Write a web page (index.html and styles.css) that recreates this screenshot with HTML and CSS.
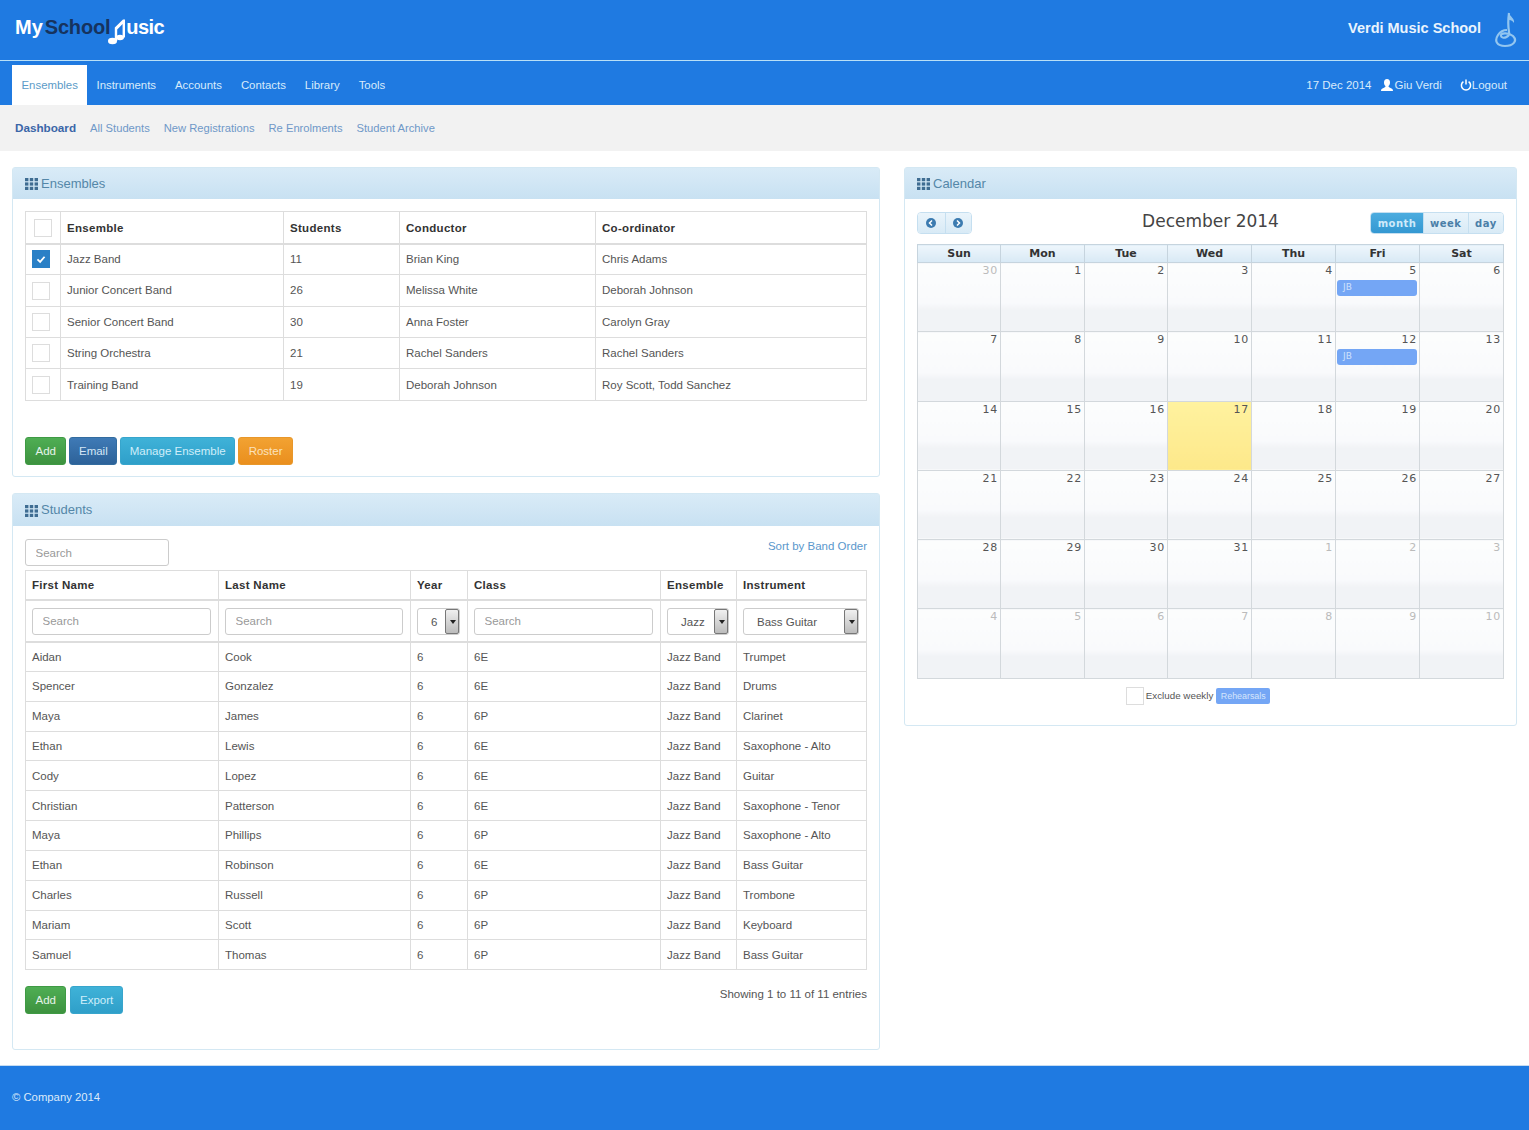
FILE: index.html
```html
<!DOCTYPE html>
<html lang="en">
<head>
<meta charset="utf-8">
<title>MySchoolMusic</title>
<link rel="stylesheet" href="styles.css">
</head>
<body>
<svg class="defs" width="0" height="0" aria-hidden="true">
  <symbol id="grid" viewBox="0 0 13 12">
    <rect x="0" y="0" width="3.4" height="3.2"/><rect x="4.8" y="0" width="3.4" height="3.2"/><rect x="9.6" y="0" width="3.4" height="3.2"/>
    <rect x="0" y="4.4" width="3.4" height="3.2"/><rect x="4.8" y="4.4" width="3.4" height="3.2"/><rect x="9.6" y="4.4" width="3.4" height="3.2"/>
    <rect x="0" y="8.8" width="3.4" height="3.2"/><rect x="4.8" y="8.8" width="3.4" height="3.2"/><rect x="9.6" y="8.8" width="3.4" height="3.2"/>
  </symbol>
</svg>
<header class="top">
  <div class="logo">
    <span class="logo-my">My</span><span class="logo-school">School</span>
    <svg class="logo-note" viewBox="0 0 19 27"><ellipse cx="4.500" cy="23" rx="4.500" ry="3.200"/><ellipse cx="12" cy="19.500" rx="4" ry="2.700"/><path d="M6.800 23V9.500L15 1.500H17V19.500H14.600V6L9.200 11.500V23Z"/></svg>
    <span class="logo-usic">usic</span>
  </div>
  <div class="school">
    <span>Verdi Music School</span>
    <svg class="school-note" viewBox="0 0 24 36"><path class="note-flag" d="M15 1C16 5 21 6 20 11 18 8 16 8 15 8Z"/><path d="M15 1C14 8 14 14 15 20 16 26 8 27 7 24 6 21 14 20 19 24 24 29 19 34 11 34 3 34 0 29 4 23 6 20 10 18 13 18"/></svg>
  </div>
</header>
<nav class="mainnav">
  <ul class="tabs">
    <li class="tab active">Ensembles</li>
    <li class="tab">Instruments</li>
    <li class="tab">Accounts</li>
    <li class="tab">Contacts</li>
    <li class="tab">Library</li>
    <li class="tab">Tools</li>
  </ul>
  <div class="usernav">
    <span class="date">17 Dec 2014</span>
    <svg class="i-user" viewBox="0 0 12 12"><path d="M6 0C8 0 9 1.500 9 3.400 9 5 8.300 6.300 7.500 7 7.500 8 8 8.300 9.500 8.900 11 9.500 12 10 12 12H0C0 10 1 9.500 2.500 8.900 4 8.300 4.500 8 4.500 7 3.700 6.300 3 5 3 3.400 3 1.500 4 0 6 0Z"/></svg>
    <span class="uname">Giu Verdi</span>
    <svg class="i-power" viewBox="0 0 12 12"><path d="M3.400 2.600A4.600 4.600 0 1 0 8.600 2.600M6 .5V5.500"/></svg>
    <span>Logout</span>
  </div>
</nav>
<nav class="subnav">
  <span class="sub current">Dashboard</span>
  <span class="sub">All Students</span>
  <span class="sub">New Registrations</span>
  <span class="sub">Re Enrolments</span>
  <span class="sub">Student Archive</span>
</nav>
<main class="content">
  <div class="leftcol">
    <section class="panel ensembles">
      <h2 class="panel-head"><svg class="i-grid"><use href="#grid"/></svg>Ensembles</h2>
      <div class="panel-body">
        <table class="tbl ens-table">
          <colgroup><col class="e1"><col class="e2"><col class="e3"><col class="e4"><col></colgroup>
          <thead><tr><th><span class="cb cb-head"></span></th><th>Ensemble</th><th>Students</th><th>Conductor</th><th>Co-ordinator</th></tr></thead>
          <tbody>
            <tr><td><span class="cb checked"><svg viewBox="0 0 18 18"><path d="M5 9.500L8 12.300 13 6.500"/></svg></span></td><td>Jazz Band</td><td>11</td><td>Brian King</td><td>Chris Adams</td></tr>
            <tr><td><span class="cb"></span></td><td>Junior Concert Band</td><td>26</td><td>Melissa White</td><td>Deborah Johnson</td></tr>
            <tr><td><span class="cb"></span></td><td>Senior Concert Band</td><td>30</td><td>Anna Foster</td><td>Carolyn Gray</td></tr>
            <tr><td><span class="cb"></span></td><td>String Orchestra</td><td>21</td><td>Rachel Sanders</td><td>Rachel Sanders</td></tr>
            <tr><td><span class="cb"></span></td><td>Training Band</td><td>19</td><td>Deborah Johnson</td><td>Roy Scott, Todd Sanchez</td></tr>
          </tbody>
        </table>
        <div class="btns ens-btns">
          <button class="btn green">Add</button>
          <button class="btn navy">Email</button>
          <button class="btn cyan">Manage Ensemble</button>
          <button class="btn orange">Roster</button>
        </div>
      </div>
    </section>
    <section class="panel students">
      <h2 class="panel-head"><svg class="i-grid"><use href="#grid"/></svg>Students</h2>
      <div class="panel-body">
        <div class="stu-tools">
          <input class="field global" placeholder="Search">
          <a class="sortlink">Sort by Band Order</a>
        </div>
        <table class="tbl stu-table">
          <colgroup><col class="s1"><col class="s2"><col class="s3"><col class="s4"><col class="s5"><col></colgroup>
          <thead>
            <tr class="stu-head"><th>First Name</th><th>Last Name</th><th>Year</th><th>Class</th><th>Ensemble</th><th>Instrument</th></tr>
            <tr class="stu-filter">
              <td><input class="field" placeholder="Search"></td>
              <td><input class="field" placeholder="Search"></td>
              <td><div class="sel">6<span class="sel-btn"></span></div></td>
              <td><input class="field" placeholder="Search"></td>
              <td><div class="sel">Jazz<span class="sel-btn"></span></div></td>
              <td><div class="sel">Bass Guitar<span class="sel-btn"></span></div></td>
            </tr>
          </thead>
          <tbody>
            <tr><td>Aidan</td><td>Cook</td><td>6</td><td>6E</td><td>Jazz Band</td><td>Trumpet</td></tr>
            <tr><td>Spencer</td><td>Gonzalez</td><td>6</td><td>6E</td><td>Jazz Band</td><td>Drums</td></tr>
            <tr><td>Maya</td><td>James</td><td>6</td><td>6P</td><td>Jazz Band</td><td>Clarinet</td></tr>
            <tr><td>Ethan</td><td>Lewis</td><td>6</td><td>6E</td><td>Jazz Band</td><td>Saxophone - Alto</td></tr>
            <tr><td>Cody</td><td>Lopez</td><td>6</td><td>6E</td><td>Jazz Band</td><td>Guitar</td></tr>
            <tr><td>Christian</td><td>Patterson</td><td>6</td><td>6E</td><td>Jazz Band</td><td>Saxophone - Tenor</td></tr>
            <tr><td>Maya</td><td>Phillips</td><td>6</td><td>6P</td><td>Jazz Band</td><td>Saxophone - Alto</td></tr>
            <tr><td>Ethan</td><td>Robinson</td><td>6</td><td>6E</td><td>Jazz Band</td><td>Bass Guitar</td></tr>
            <tr><td>Charles</td><td>Russell</td><td>6</td><td>6P</td><td>Jazz Band</td><td>Trombone</td></tr>
            <tr><td>Mariam</td><td>Scott</td><td>6</td><td>6P</td><td>Jazz Band</td><td>Keyboard</td></tr>
            <tr><td>Samuel</td><td>Thomas</td><td>6</td><td>6P</td><td>Jazz Band</td><td>Bass Guitar</td></tr>
          </tbody>
        </table>
        <div class="stu-foot">
          <div class="btns">
            <button class="btn green">Add</button>
            <button class="btn cyan export">Export</button>
          </div>
          <span class="info">Showing 1 to 11 of 11 entries</span>
        </div>
      </div>
    </section>
  </div>
  <section class="panel calendar">
    <h2 class="panel-head"><svg class="i-grid"><use href="#grid"/></svg>Calendar</h2>
    <div class="panel-body">
      <div class="cal-bar">
        <div class="cal-group">
          <span class="cal-btn arrow"><svg viewBox="0 0 10 10"><circle cx="5" cy="5" r="5"/><path d="M6 2.500L3.500 5 6 7.500"/></svg></span>
          <span class="cal-btn arrow"><svg viewBox="0 0 10 10"><circle cx="5" cy="5" r="5"/><path d="M4 2.500L6.500 5 4 7.500"/></svg></span>
        </div>
        <div class="cal-title">December 2014</div>
        <div class="cal-group cal-views">
          <span class="cal-btn view on">month</span>
          <span class="cal-btn view">week</span>
          <span class="cal-btn view">day</span>
        </div>
      </div>
      <table class="cal">
        <colgroup><col class="c83"><col class="c84"><col class="c83"><col class="c84"><col class="c84"><col class="c84"><col class="c84"></colgroup>
        <thead><tr><th>Sun</th><th>Mon</th><th>Tue</th><th>Wed</th><th>Thu</th><th>Fri</th><th>Sat</th></tr></thead>
        <tbody>
          <tr><td class="other">30</td><td>1</td><td>2</td><td>3</td><td>4</td><td>5<div class="event">JB</div></td><td>6</td></tr>
          <tr><td>7</td><td>8</td><td>9</td><td>10</td><td>11</td><td>12<div class="event">JB</div></td><td>13</td></tr>
          <tr><td>14</td><td>15</td><td>16</td><td class="today">17</td><td>18</td><td>19</td><td>20</td></tr>
          <tr><td>21</td><td>22</td><td>23</td><td>24</td><td>25</td><td>26</td><td>27</td></tr>
          <tr><td>28</td><td>29</td><td>30</td><td>31</td><td class="other">1</td><td class="other">2</td><td class="other">3</td></tr>
          <tr><td class="other">4</td><td class="other">5</td><td class="other">6</td><td class="other">7</td><td class="other">8</td><td class="other">9</td><td class="other">10</td></tr>
        </tbody>
      </table>
      <div class="legend">
        <span class="cb"></span>
        <span class="legend-text">Exclude weekly</span>
        <span class="badge">Rehearsals</span>
      </div>
    </div>
  </section>
</main>
<footer class="foot">© Company 2014</footer>
</body>
</html>
```
FILE: styles.css
```css
* { box-sizing: border-box; }
html, body { margin: 0; padding: 0; }
body { font: 11.500px/1.4 "Liberation Sans", Arial, sans-serif; color: #555; background: #fff; }
.defs { position: absolute; }

.top { height: 61px; background: #1f7ae1; border-bottom: 1px solid #b9e0f7; display: flex; justify-content: space-between; align-items: flex-start; padding: 0 11px 0 15px; }
.logo { display: flex; align-items: flex-start; padding-top: 14px; font-size: 20px; font-weight: 700; line-height: 26px; color: #fff; }
.logo-my { margin-right: 2px; }
.logo-school { color: #16335e; letter-spacing: -.2px; margin-right: -2px; }
.logo-note { width: 19px; height: 27px; fill: #fff; margin-top: 4px; }
.logo-usic { margin-left: -1px; letter-spacing: -.6px; }
.school { display: flex; align-items: flex-start; color: #eaf4fd; font-size: 14.500px; font-weight: 700; }
.school span { margin-top: 18px; }
.school-note { width: 24px; height: 36px; margin: 12px 0 0 13px; fill: none; stroke: #93c6f0; stroke-width: 2.200; }
.school-note .note-flag { fill: #93c6f0; stroke: none; }

.mainnav { height: 44px; background: #1f7ae1; display: flex; justify-content: space-between; padding: 4px 22px 0 12px; color: #d8ebfb; }
.tabs { list-style: none; margin: 0; padding: 0; display: flex; }
.tab { padding: 0 9.500px; line-height: 40px; height: 40px; font-size: 11.400px; }
.tab.active { background: #fff; color: #5b9bc8; width: 75px; }
.usernav { display: flex; align-items: center; height: 40px; }
.date { margin-right: 9px; }
.i-user { width: 12px; height: 12px; fill: #fff; margin-right: 2px; }
.uname { margin-right: 18px; }
.i-power { width: 12px; height: 12px; fill: none; stroke: #fff; stroke-width: 1.500; }

.subnav { height: 46px; background: #f2f2f2; display: flex; gap: 14px; align-items: center; padding: 1px 0 0 15px; color: #6f98c8; font-size: 11.200px; }
.sub.current { color: #3a66a8; font-weight: 700; font-size: 11.700px; }

.content { display: flex; align-items: flex-start; gap: 24px; padding: 16px 12px 15px; }
.leftcol { width: 868px; display: flex; flex-direction: column; gap: 16px; flex: none; }
.panel { border: 1px solid #d4e8f3; border-radius: 3px; background: #fff; }
.panel-head { margin: 0; height: 31px; padding: 1px 12px 0; display: flex; align-items: center; gap: 3px; font-size: 13px; font-weight: 400; color: #5487a8; background: linear-gradient(#d9ebf7, #c8e1f2); }
.i-grid { width: 13px; height: 12px; fill: #3f6d92; flex: none; }
.panel-body { padding: 12px; }
.ensembles { height: 310px; }
.students { height: 557px; }
.students .panel-head { height: 32px; }
.calendar { width: 613px; height: 559px; flex: none; }

.tbl { width: 842px; border-collapse: collapse; table-layout: fixed; }
.tbl th, .tbl td { border: 1px solid #ddd; padding: 0 0 0 6px; text-align: left; overflow: hidden; white-space: nowrap; }
.tbl th { color: #333; font-weight: 700; font-size: 11.500px; letter-spacing: .3px; padding-top: 1px; }
.tbl thead th { border-bottom-width: 2px; }
.e1 { width: 35px; } .e2 { width: 223px; } .e3 { width: 116px; } .e4 { width: 196px; }
.s1 { width: 193px; } .s2 { width: 192px; } .s3 { width: 57px; } .s4 { width: 193px; } .s5 { width: 76px; }
.ens-table th { height: 32px; }
.ens-table td { height: 31.350px; }
.cb { display: block; width: 18px; height: 18px; background: #fff; border: 1px solid #ddd; }
.cb-head { margin-left: 2px; }
.cb.checked { background: #2a80c6; border-color: #2a80c6; }
.cb.checked svg { display: block; width: 16px; height: 16px; fill: none; stroke: #fff; stroke-width: 2; }

.btns { display: flex; gap: 3px; }
.ens-btns { margin-top: 36px; }
.btn { height: 28px; padding: 0 9.500px; font: 11.500px "Liberation Sans", Arial, sans-serif; border-radius: 3px; border: 1px solid; color: #e6f3ea; }
.green { background: linear-gradient(#4fae54, #3d923f); border-color: #3f9a44; }
.navy { padding: 0 8.500px; background: linear-gradient(#3f7ab6, #2d6299); border-color: #336c9f; color: #d5e6f6; }
.cyan { padding: 0 8.500px; background: linear-gradient(#3fb2d8, #2f9fc9); border-color: #37a5cc; color: #cfeefa; }
.orange { background: linear-gradient(#f2a232, #ea8f1e); border-color: #e8972a; color: #fbe2bd; }
.export { margin-left: 1px; }

.stu-tools { height: 32px; display: flex; justify-content: space-between; align-items: flex-start; }
.field { display: block; width: 100%; height: 27px; padding: 0 9.500px; border: 1px solid #ccc; border-radius: 3px; background: #fff; font: 11.500px "Liberation Sans", Arial, sans-serif; color: #555; }
.field::placeholder { color: #999; opacity: 1; }
.global { width: 144px; margin-top: 1px; }
.sortlink { color: #5a97cc; line-height: 16px; }
.stu-head th { height: 29px; }
.stu-filter td { height: 42px; padding-top: 1px; padding-right: 7px; border-bottom-width: 2px; }
.stu-table tbody td { height: 29.850px; }
.sel { position: relative; height: 27px; line-height: 26px; border: 1px solid #ccc; border-radius: 3px; padding-left: 13px; background: #fff; }
.sel-btn { position: absolute; right: 0; top: 0; width: 14px; height: 25px; background: linear-gradient(#f0f0f0, #bcbcbc); border: 1px solid #777; border-radius: 2px; }
.sel-btn::after { content: ""; position: absolute; left: 3.500px; top: 10px; border: 3px solid transparent; border-top: 4px solid #222; border-bottom: 0; }
.stu-foot { display: flex; justify-content: space-between; align-items: flex-start; margin-top: 16px; }
.info { color: #555; }

.cal-bar { height: 33px; display: grid; grid-template-columns: 1fr auto 1fr; align-items: start; }
.cal-group { display: flex; justify-self: start; height: 22px; margin-top: 1px; border: 1px solid #c5dff0; border-radius: 4px; overflow: hidden; }
.cal-views { justify-self: end; }
.cal-btn { display: flex; align-items: center; justify-content: center; background: linear-gradient(#eaf4fb, #d8eaf6); color: #4b7fa8; font: 700 10px "DejaVu Sans", sans-serif; letter-spacing: .5px; }
.cal-btn + .cal-btn { border-left: 1px solid #c5dff0; }
.arrow { width: 26.500px; }
.arrow svg { width: 10px; height: 10px; fill: #3c7bb0; stroke: none; }
.arrow svg path { fill: none; stroke: #fff; stroke-width: 1.500; }
.view { padding: 0 6.300px; }
.on { background: linear-gradient(#4cacdf, #3498d2); color: #cfeafa; }
.cal-title { font: 17px "DejaVu Sans", sans-serif; color: #444; line-height: 20px; }

.cal { width: 586px; height: 434px; border-collapse: collapse; table-layout: fixed; font-family: "DejaVu Sans", sans-serif; }
.c83 { width: 83px; } .c84 { width: 84px; }
.cal th { height: 18px; padding: 0; border: 1px solid #c6d4de; background: linear-gradient(#eef6fc, #d8e9f5); color: #333; font-size: 11px; font-weight: 700; }
.cal td { height: 69.300px; padding: 0 2px 0 0; border: 1px solid #d3d8dc; vertical-align: top; text-align: right; font-size: 11px; letter-spacing: .8px; line-height: 15px; color: #555; background: linear-gradient(#fcfdfd 0%, #f9fafc 58%, #f1f3f6 68%, #f1f3f6 100%); }
.cal td.other { color: #bbb; }
.cal td.today { background: linear-gradient(#fff29f, #fde88a); }
.event { height: 16px; margin: 2px 0 0 1px; padding-left: 6px; border-radius: 3px; background: #74a6f5; color: #cfe1fb; font-size: 9px; line-height: 15px; letter-spacing: 0; text-align: left; }

.legend { display: flex; align-items: center; justify-content: center; height: 18px; margin-top: 8px; gap: 2px; padding-right: 25px; }
.legend-text { font-size: 9.800px; color: #555; }
.badge { height: 16px; margin-left: 1px; padding: 0 4.500px; border-radius: 2px; background: #74a6f5; color: #d5e5fb; font-size: 8.900px; line-height: 16px; }

.foot { height: 65px; background: #1f7ae1; border-top: 1px solid #c5dcf2; padding: 24px 12px 0; color: #dceafa; font-size: 11.300px; }
```
